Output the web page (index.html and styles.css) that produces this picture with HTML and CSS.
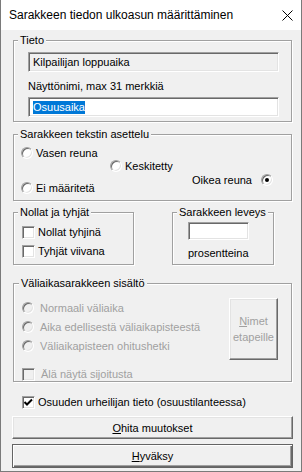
FILE: index.html
```html
<!DOCTYPE html>
<html lang="fi">
<head>
  <meta charset="UTF-8">
  <title>Sarakkeen tiedon ulkoasun määrittäminen</title>
  <link rel="stylesheet" href="styles.css">
</head>
<body>

  <div class="window">
    <!-- Otsikkopalkki -->
    <div class="titlebar">
      <span class="title">Sarakkeen tiedon ulkoasun määrittäminen</span>
      <svg class="close" width="11" height="11" viewBox="0 0 11 11">
        <path d="M0.5 0.5 L10.5 10.5 M10.5 0.5 L0.5 10.5" stroke="#000" stroke-width="1" fill="none"/>
      </svg>
    </div>

    <div class="content">

      <div class="group tieto">
        <span class="gtitle">Tieto</span>
        <div class="field readonly">Kilpailijan loppuaika</div>
        <div class="label">Näyttönimi, max 31 merkkiä</div>
        <div class="field edit"><span class="selected">Osuusaika</span></div>
      </div>

      <div class="group asettelu">
        <span class="gtitle">Sarakkeen tekstin asettelu</span>
        <div class="option vasen"><span class="radio"></span>Vasen reuna</div>
        <div class="option keski"><span class="radio"></span>Keskitetty</div>
        <div class="last-row">
          <div class="option ei"><span class="radio"></span>Ei määritetä</div>
          <div class="option oikea">Oikea reuna<span class="radio checked"></span></div>
        </div>
      </div>

      <div class="pair">
        <div class="group nollat">
          <span class="gtitle">Nollat ja tyhjät</span>
          <div class="option first"><span class="check"></span>Nollat tyhjinä</div>
          <div class="option second"><span class="check"></span>Tyhjät viivana</div>
        </div>
        <div class="group leveys">
          <span class="gtitle">Sarakkeen leveys</span>
          <div class="field small"></div>
          <div class="label pros">prosentteina</div>
        </div>
      </div>

      <div class="group valiaika">
        <span class="gtitle">Väliaikasarakkeen sisältö</span>
        <div class="vbody">
          <div class="vlist">
            <div class="option disabled"><span class="radio"></span>Normaali väliaika</div>
            <div class="option disabled"><span class="radio"></span>Aika edellisestä väliaikapisteestä</div>
            <div class="option disabled"><span class="radio"></span>Väliaikapisteen ohitushetki</div>
            <div class="option disabled sijoitus"><span class="check"></span>Älä näytä sijoitusta</div>
          </div>
          <div class="btn nimet"><span><u>N</u>imet<br>etapeille</span></div>
        </div>
      </div>

      <div class="option main-check">
        <span class="check">
          <svg width="11" height="11" viewBox="0 0 11 11">
            <path d="M1.5 5 L4 7.5 L9 2.5" stroke="#000" stroke-width="2" fill="none"/>
          </svg>
        </span>Osuuden urheilijan tieto (osuustilanteessa)
      </div>

      <div class="btn wide ohita"><span><u>O</u>hita muutokset</span></div>
      <div class="btn wide default"><span><u>H</u>yväksy</span></div>

    </div>
  </div>

</body>
</html>
```

FILE: styles.css
```css
body {
  margin: 0;
  background: #f0f0f0;
  font-family: "Liberation Sans", Arial, sans-serif;
  font-size: 11px;
  color: #000;
}
.window {
  width: 302px;
  height: 472px;
  box-sizing: border-box;
  border: 1px solid #7a7a7a;
  border-top: none;
  background: #f0f0f0;
  overflow: hidden;
}
.titlebar {
  height: 30px;
  background: #fff;
  display: flex;
  align-items: center;
  justify-content: space-between;
  padding: 0 8px 0 8px;
}
.title {
  font-size: 12px;
}
.close {
  display: block;
}
.content {
  display: flex;
  flex-direction: column;
  align-items: flex-start;
  padding: 10px 0 0 12px;
}

/* ryhmäkehykset */
.group {
  box-sizing: border-box;
  border: 1px solid #a0a0a0;
  box-shadow: inset 1px 1px #fff, 1px 1px #fff;
  display: flex;
  flex-direction: column;
  align-items: flex-start;
}
.gtitle {
  margin: -8px 0 0 4px;
  padding: 0 2px;
  background: #f0f0f0;
  line-height: 14px;
  height: 14px;
}
.tieto {
  width: 279px;
  height: 82px;
}
.asettelu {
  width: 279px;
  height: 67px;
  margin-top: 12px;
}
.pair {
  display: flex;
  gap: 38px;
  margin-top: 11px;
}
.nollat {
  width: 121px;
  height: 53px;
}
.leveys {
  width: 102px;
  height: 53px;
}
.valiaika {
  width: 279px;
  height: 99px;
  margin-top: 18px;
}
.valiaika .gtitle {
  margin-left: 5px;
}

/* kentät */
.field {
  box-sizing: border-box;
  border: 1px solid;
  border-color: #a0a0a0 #fff #fff #a0a0a0;
  box-shadow: inset 1px 1px #696969, inset -1px -1px #e3e3e3;
  width: 251px;
  height: 20px;
  line-height: 18px;
  padding: 0 4px;
  margin-left: 14px;
}
.readonly {
  margin-top: 5px;
  background: #f0f0f0;
}
.edit {
  background: #fff;
  margin-top: 4px;
}
.selected {
  display: inline-block;
  background: #0078d7;
  color: #fff;
  line-height: 13px;
  vertical-align: middle;
  margin-top: -2px;
}
.label {
  line-height: 14px;
  margin: 7px 0 0 14px;
}
.small {
  width: 61px;
  height: 18px;
  background: #fff;
  margin: 3px 0 0 15px;
}
.pros {
  margin: 6px 0 0 15px;
}

/* valinnat */
.option {
  display: flex;
  align-items: center;
  gap: 3px;
  height: 14px;
  line-height: 14px;
  white-space: nowrap;
}
.radio, .check {
  box-sizing: border-box;
  flex: none;
  display: flex;
  align-items: center;
  justify-content: center;
  background: #fff;
  border: 1px solid;
  border-color: #a0a0a0 #fff #fff #a0a0a0;
  box-shadow: inset 1px 1px #696969, inset -1px -1px #e3e3e3;
}
.radio {
  width: 12px;
  height: 12px;
  border-radius: 50%;
}
.radio.checked::after {
  content: "";
  width: 4px;
  height: 4px;
  border-radius: 50%;
  background: #000;
}
.check {
  width: 13px;
  height: 13px;
}
.check svg {
  display: block;
}
.vasen {
  margin: 5px 0 0 7px;
}
.keski {
  margin: -1px 0 0 96px;
}
.last-row {
  align-self: stretch;
  display: flex;
  justify-content: space-between;
  height: 22px;
  padding: 0 18px 0 7px;
}
.ei {
  align-self: flex-end;
}
.oikea {
  align-self: flex-start;
  gap: 9px;
}
.nollat .first {
  margin: 6px 0 0 8px;
}
.nollat .second {
  margin: 5px 0 0 8px;
}
.vbody {
  align-self: stretch;
  display: flex;
  justify-content: space-between;
}
.vlist {
  display: flex;
  flex-direction: column;
  gap: 5px;
  padding: 11px 0 0 8px;
}
.disabled {
  color: #a0a0a0;
  gap: 6px;
}
.disabled .radio, .disabled .check {
  background: #f0f0f0;
}
.sijoitus {
  margin-top: 9px;
}
.main-check {
  margin: 13px 0 0 9px;
}

/* painikkeet */
.btn {
  box-sizing: border-box;
  display: flex;
  align-items: center;
  justify-content: center;
  text-align: center;
  background: #f0f0f0;
  border: 1px solid;
  border-color: #fff #696969 #696969 #fff;
  box-shadow: inset -1px -1px #a0a0a0, inset 1px 1px #e3e3e3;
}
.nimet {
  width: 49px;
  height: 62px;
  margin: 8px 13px 0 0;
  color: #a0a0a0;
  line-height: 16px;
}
.wide {
  width: 281px;
  margin-left: -1px;
}
.ohita {
  height: 23px;
  margin-top: 7px;
}
.default {
  height: 24px;
  margin-top: 5px;
  border: 1px solid #646464;
  box-shadow: inset 1px 1px #fff, inset -1px -1px #696969, inset -2px -2px #a0a0a0;
}
```
